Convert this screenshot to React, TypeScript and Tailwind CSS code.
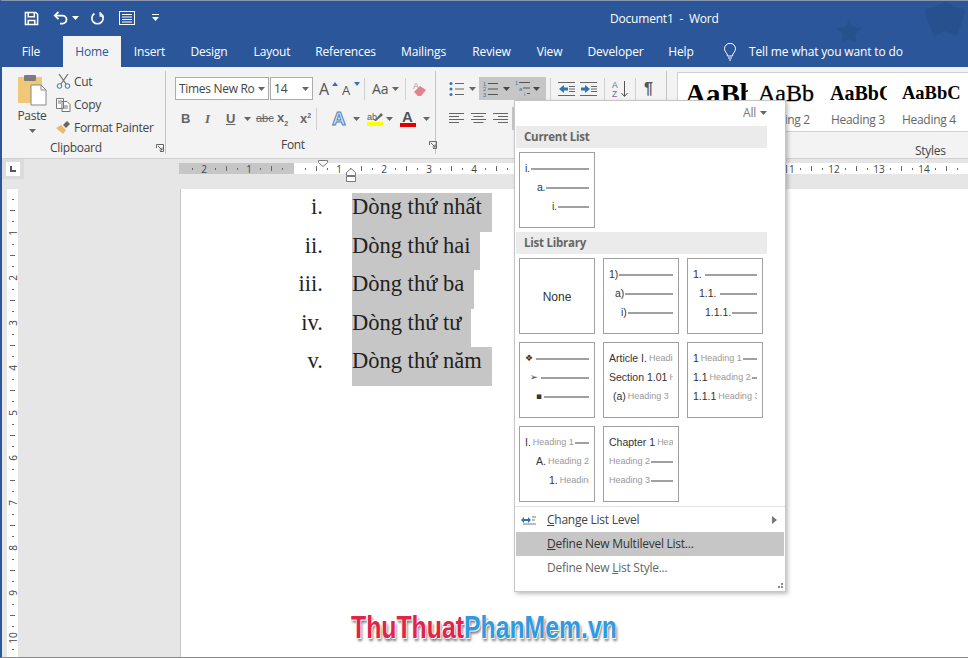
import React from 'react';

const Caret = ({ color = '#666' }: { color?: string }) => (
  <svg width="7" height="4" viewBox="0 0 7 4" className="shrink-0"><path d="M0 0h7L3.5 4z" fill={color} /></svg>
);

const Launcher = () => (
  <svg width="8" height="8" viewBox="0 0 8 8" className="shrink-0" fill="none" stroke="#666">
    <path d="M.5 4V.5H7.500V7.500H4" /><path d="M2 2l4 4M6 3.500V6H3.500" />
  </svg>
);

const Lines = ({ x = 0, ys, w = 14, color = '#777' }: { x?: number; ys: number[]; w?: number; color?: string }) => (
  <g stroke={color}>{ys.map((y) => <path key={y} d={`M${x} ${y}h${w}`} />)}</g>
);

const Tabs = [
  { t: 'Insert', w: 'w-[57px]' },
  { t: 'Design', w: 'w-[62px]' },
  { t: 'Layout', w: 'w-[64px]' },
  { t: 'References', w: 'w-[83px]' },
  { t: 'Mailings', w: 'w-[73px]' },
  { t: 'Review', w: 'w-[63px]' },
  { t: 'View', w: 'w-[53px]' },
  { t: 'Developer', w: 'w-[79px]' },
  { t: 'Help', w: 'w-[52px]' },
];

const TitleBar = () => (
  <div className="relative h-[33px] shrink-0 flex items-center pt-[1px] bg-[#2b579a] text-white">
    <svg width="15" height="15" viewBox="0 0 16 16" className="ml-[22px]" fill="none" stroke="#fff" strokeWidth="1.6">
      <path d="M1.500 1.500h11l2 2v11h-13z" /><path d="M4.500 2v4h6.500V2M4.500 14.500v-4.500h7v4.500" />
    </svg>
    <svg width="16" height="14" viewBox="0 0 16 14" className="ml-[14px]" fill="none" stroke="#fff" strokeWidth="1.8">
      <path d="M5.500 1L1.800 4.600l3.700 3.600" /><path d="M2 4.600h7.500a4 4 0 0 1 0 8H7" />
    </svg>
    <div className="ml-[3px]"><Caret color="#fff" /></div>
    <svg width="15" height="15" viewBox="0 0 16 16" className="ml-[11px]" fill="none" stroke="#fff" strokeWidth="1.8">
      <path d="M4.700 2.600a6 6 0 1 0 6.600 0" /><path d="M10.800 1v4.400h4" strokeWidth="1.400" />
    </svg>
    <svg width="16" height="14" viewBox="0 0 16 14" className="ml-[14px]" fill="none" stroke="#fff">
      <rect x=".5" y=".5" width="15" height="13" /><path d="M3 3.500h10M3 6h10M3 8.500h10M3 11h10" />
    </svg>
    <svg width="7" height="8" viewBox="0 0 7 8" className="ml-[17px]" fill="#fff"><path d="M0 0h7v1H0zM0 3h7L3.500 7z" /></svg>
    <span className="ml-[451px] mt-[1px] text-[12px] tracking-[-0.2px]">Document1&nbsp; -&nbsp; Word</span>
    <svg width="46" height="44" viewBox="0 0 24 24" className="absolute left-[920px] top-[-3px]" fill="#27508f"><path d="M12 2l6 3 5 1-2 8-3 7-6-3-6 3-3-7-2-8 5-1z" /></svg>
    <svg width="30" height="30" viewBox="0 0 24 24" className="absolute left-[832px] top-[16px]" fill="#27508f"><path d="M12 2l3 6 7 1-5 5 1 7-6-3-6 3 1-7-5-5 7-1z" /></svg>
  </div>
);

const TabRow = () => (
  <div className="h-[33px] shrink-0 flex items-end bg-[#2b579a] text-white text-[12px] tracking-[-0.15px]">
    <div className="w-[58px] mr-[3px] h-[30px] flex items-center justify-center">File</div>
    <div className="w-[58px] h-[31px] pt-[1px] bg-[#f3f3f3] text-[#2b579a] flex items-center justify-center">Home</div>
    {Tabs.map((x) => (
      <div key={x.t} className={`${x.w} h-[30px] flex items-center justify-center`}>{x.t}</div>
    ))}
    <svg width="16" height="18" viewBox="0 0 16 18" className="ml-[15px] mb-[6px]" fill="none" stroke="#fff">
      <path d="M5.500 13c0-3-3-4-3-7.200a5.500 5.500 0 0 1 11 0C13.500 9 10.500 10 10.500 13zM6 15h4M7 17h2" />
    </svg>
    <span className="ml-[11px] h-[30px] flex items-center">Tell me what you want to do</span>
  </div>
);

const GroupLabel = ({ text, cls }: { text: string; cls: string }) => (
  <div className={`h-[18px] flex items-center text-[12px] text-[#444] tracking-[-0.3px] ${cls}`}>{text}</div>
);

const Clipboard = () => (
  <div className="w-[164px] shrink-0 border-r border-[#c4c4c4] my-[4px] flex flex-col">
    <div className="flex h-[70px]">
      <div className="w-[54px] flex flex-col items-center pl-[6px]">
        <svg width="30" height="32" viewBox="0 0 30 32" className="mt-[3px]">
          <rect x="1" y="3" width="24" height="26" rx="1" fill="#efc878" />
          <rect x="7" y="1" width="12" height="6" rx="1" fill="#7b7b7b" />
          <path d="M14 11h10l5 5v15H14z" fill="#fff" stroke="#888" />
          <path d="M24 11v5h5" fill="none" stroke="#888" />
        </svg>
        <span className="text-[12px] leading-[14px] mt-[3px] text-[#444] tracking-[-0.3px]">Paste</span>
        <div className="mt-[6px]"><Caret /></div>
      </div>
      <div className="flex flex-col text-[12px] text-[#444] tracking-[-0.3px] mt-[-1px] leading-[23px]">
        <div className="flex items-center h-[23px]">
          <svg width="15" height="15" viewBox="0 0 15 15" fill="none" className="mr-[3px]">
            <path d="M3 0l7 10M12 0L5 10" stroke="#777" strokeWidth="1.300" />
            <circle cx="3.500" cy="12" r="2.300" stroke="#2e74b5" /><circle cx="11.500" cy="12" r="2.300" stroke="#2e74b5" />
          </svg>
          Cut
        </div>
        <div className="flex items-center h-[23px]">
          <svg width="15" height="15" viewBox="0 0 15 15" fill="#fff" stroke="#777" className="mr-[3px]">
            <path d="M.5 1.500h7v10h-7zM6 4.500h5l3 3v7H6z" /><path d="M2 4h4M2 6h3M8 9h4M8 11h4" />
          </svg>
          Copy
        </div>
        <div className="flex items-center h-[23px]">
          <svg width="15" height="15" viewBox="0 0 15 15" className="mr-[3px]">
            <path d="M0 8l5-3 5 5-3 4z" fill="#eeb868" /><path d="M7 5l4-4 3 3-4 4z" fill="#666" />
          </svg>
          Format Painter
        </div>
      </div>
    </div>
    <div className="flex items-center">
      <GroupLabel text="Clipboard" cls="ml-[48px]" />
      <div className="ml-[54px]"><Launcher /></div>
    </div>
  </div>
);

const Sep = ({ cls }: { cls: string }) => <div className={`w-px h-[22px] bg-[#d0d0d0] ${cls}`} />;

const FontGroup = () => (
  <div className="w-[270px] shrink-0 border-r border-[#c4c4c4] my-[4px] flex flex-col text-[#555]">
    <div className="h-[70px] flex flex-col pl-[9px] pt-[6px]">
      <div className="flex items-center h-[23px]">
        <div className="w-[94px] h-[23px] border border-[#ababab] bg-white flex items-center justify-between px-[3px] text-[12px] text-[#444] tracking-[-0.3px]">
          Times New Ro<Caret />
        </div>
        <div className="w-[43px] h-[23px] ml-px border border-[#ababab] bg-white flex items-center justify-between px-[3px] text-[12px] text-[#444]">
          14<Caret />
        </div>
        <div className="ml-[6px] w-[13px] text-[16px] leading-none">A</div>
        <div className="w-[8px] mb-[10px]"><svg width="6" height="4" viewBox="0 0 6 4"><path d="M0 4h6L3 0z" fill="#2e74b5" /></svg></div>
        <div className="ml-[2px] w-[12px] text-[13px] leading-none mt-[3px]">A</div>
        <div className="w-[7px] mb-[10px]"><svg width="6" height="4" viewBox="0 0 6 4"><path d="M0 0h6L3 4z" fill="#2e74b5" /></svg></div>
        <Sep cls="ml-[3px]" />
        <div className="ml-[7px] text-[14px] leading-none flex items-center gap-[3px]">Aa<Caret /></div>
        <Sep cls="ml-[6px]" />
        <svg width="16" height="16" viewBox="0 0 16 16" className="ml-[6px]">
          <path d="M2 11l6-6 6 4-5 6H6z" fill="#e8808c" /><text x="1" y="8" fontSize="9" fill="#a0a0a0" fontFamily="Liberation Sans">A</text>
        </svg>
      </div>
      <div className="flex items-center h-[23px] mt-[7px]">
        <span className="ml-[6px] w-[24px] text-[13px] font-bold text-[#666] font-['Liberation_Sans']">B</span>
        <span className="w-[21px] text-[13px] italic font-['Liberation_Serif'] font-bold text-[#666]">I</span>
        <span className="w-[18px] text-[13px] font-bold underline text-[#666] font-['Liberation_Sans']">U</span>
        <Caret />
        <span className="ml-[5px] w-[19px] text-[11px] line-through text-[#666] font-['Liberation_Sans']">abc</span>
        <span className="w-[23px] ml-[2px] text-[13px] font-bold text-[#666] font-['Liberation_Sans']">x<span className="text-[7px] align-sub">2</span></span>
        <span className="w-[18px] text-[13px] font-bold text-[#666] font-['Liberation_Sans']">x<span className="text-[7px] align-super">2</span></span>
        <Sep cls="ml-[-2px]" />
        <span className="ml-[15px] w-[17px] text-[19px] leading-none font-bold text-[#d4e4f6] [-webkit-text-stroke:1px_#4f81bd] font-['Liberation_Sans']">A</span>
        <div className="ml-[4px]"><Caret /></div>
        <div className="ml-[6px] w-[17px] flex flex-col items-center">
          <svg width="16" height="11" viewBox="0 0 16 11">
            <text x="0" y="9" fontSize="9" fill="#555" fontFamily="Liberation Sans">ab</text>
            <path d="M7 10l7-8 2 2-7 6z" fill="#666" />
          </svg>
          <div className="w-[16px] h-[4px] bg-[#ffff00]" />
        </div>
        <div className="ml-[3px]"><Caret /></div>
        <div className="ml-[6px] w-[17px] flex flex-col items-center text-[15px] leading-[12px] font-bold font-['Liberation_Sans'] text-[#555]">
          A<div className="w-[16px] h-[4px] bg-[#e00000]" />
        </div>
        <div className="ml-[7px]"><Caret /></div>
      </div>
    </div>
    <div className="flex items-center">
      <GroupLabel text="Font" cls="ml-[115px]" />
      <div className="ml-[124px]"><Launcher /></div>
    </div>
  </div>
);

const ParagraphGroup = () => (
  <div className="w-[231px] shrink-0 border-r border-[#c4c4c4] my-[4px] flex flex-col pl-[13px] pt-[6px]">
    <div className="flex items-center h-[23px] relative">
      <svg width="15" height="16" viewBox="0 0 15 16">
        <circle cx="2" cy="2.500" r="1.500" fill="#2e74b5" /><circle cx="2" cy="8" r="1.500" fill="#2e74b5" /><circle cx="2" cy="13.500" r="1.500" fill="#2e74b5" />
        <Lines x={6} w={9} ys={[2.5, 8, 13.5]} color="#666" />
      </svg>
      <div className="ml-[5px]"><Caret /></div>
      <div className="ml-[3px] w-[67px] h-[23px] bg-[#c6c6c6] flex items-center">
        <svg width="15" height="16" viewBox="0 0 15 16" className="ml-[4px]">
          <text x="0" y="5" fontSize="5.500" fill="#2e74b5" fontFamily="Liberation Sans">1</text>
          <text x="0" y="10" fontSize="5.500" fill="#2e74b5" fontFamily="Liberation Sans">2</text>
          <text x="0" y="15.500" fontSize="5.500" fill="#2e74b5" fontFamily="Liberation Sans">3</text>
          <Lines x={5} w={10} ys={[2.5, 8, 13.5]} color="#555" />
        </svg>
        <div className="ml-[5px]"><Caret color="#444" /></div>
        <svg width="16" height="17" viewBox="0 0 16 17" className="ml-[5px]">
          <text x="0" y="5" fontSize="5.500" fill="#2e74b5" fontFamily="Liberation Sans">1</text>
          <text x="4" y="10.500" fontSize="5.500" fill="#2e74b5" fontFamily="Liberation Sans">a</text>
          <text x="9" y="16" fontSize="5.500" fill="#2e74b5" fontFamily="Liberation Sans">i</text>
          <path d="M4 2.500h11M8 8h7M12 13.500h3" stroke="#555" />
        </svg>
        <div className="ml-[2px]"><Caret color="#444" /></div>
      </div>
      <Sep cls="ml-[4px]" />
      <svg width="17" height="14" viewBox="0 0 17 14" className="ml-[7px]">
        <path d="M1 7l5-4v2.500h4v3H6V11z" fill="#2e74b5" /><Lines x={0} w={17} ys={[0.5, 13.5]} color="#666" /><Lines x={11} w={6} ys={[4.5, 7, 9.5]} color="#666" />
      </svg>
      <svg width="17" height="14" viewBox="0 0 17 14" className="ml-[5px]">
        <path d="M10 7L5 3v2.500H1v3h4V11z" fill="#2e74b5" /><Lines x={0} w={17} ys={[0.5, 13.5]} color="#666" /><Lines x={11} w={6} ys={[4.5, 7, 9.5]} color="#666" />
      </svg>
      <Sep cls="ml-[7px]" />
      <svg width="17" height="18" viewBox="0 0 17 18" className="ml-[7px]">
        <text x="0" y="8" fontSize="8.500" fontFamily="Liberation Sans" fill="#2e74b5">A</text>
        <text x="0" y="17" fontSize="8.500" fontFamily="Liberation Sans" fill="#8a5ca8">Z</text>
        <path d="M12.500 1v15M9.500 13l3 3.500 3-3.500" fill="none" stroke="#555" />
      </svg>
      <Sep cls="ml-[6px]" />
      <span className="ml-[8px] text-[16px] leading-none text-[#555] font-bold font-['Liberation_Sans']">¶</span>
    </div>
    <div className="flex items-center h-[23px] mt-[7px]">
      <svg width="15" height="11" viewBox="0 0 15 11"><path d="M0 .5h15M0 3.500h10M0 6.500h15M0 9.500h10" stroke="#666" /></svg>
      <svg width="15" height="11" viewBox="0 0 15 11" className="ml-[7px]"><path d="M0 .5h15M2.500 3.500h10M0 6.500h15M2.500 9.500h10" stroke="#666" /></svg>
      <svg width="15" height="11" viewBox="0 0 15 11" className="ml-[7px]"><path d="M0 .5h15M5 3.500h10M0 6.500h15M5 9.500h10" stroke="#666" /></svg>
      <div className="ml-[4px] w-[16px] h-[23px] bg-[#c6c6c6]" />
    </div>
  </div>
);

const Styles = () => (
  <div className="flex-1 min-w-0 flex flex-col mt-[5px] ml-[10px]">
    <div className="h-[60px] shrink-0 bg-white border border-[#d0d0d0] border-r-0 flex overflow-hidden">
      <div className="w-[70px] shrink-0 pl-[7px] overflow-hidden font-['Liberation_Serif'] font-bold text-[29px] leading-[42px] whitespace-nowrap text-black">AaBbCc</div>
      <div className="w-[71px] shrink-0 pl-[10px] overflow-hidden whitespace-nowrap flex flex-col">
        <span className="font-['Liberation_Serif'] text-[24px] leading-[40px] text-black [-webkit-text-stroke:0.3px_#000]">AaBb</span>
        <span className="text-[12px] leading-[14px] text-[#666] tracking-[-0.3px] ml-[-2px]">Heading 2</span>
      </div>
      <div className="w-[68px] shrink-0 pl-[11px] overflow-hidden whitespace-nowrap flex flex-col">
        <span className="font-['Liberation_Serif'] font-bold text-[20px] leading-[40px] text-black">AaBbCc</span>
        <span className="text-[12px] leading-[14px] text-[#666] tracking-[-0.3px] ml-[1px]">Heading 3</span>
      </div>
      <div className="flex-1 min-w-0 pl-[15px] overflow-hidden whitespace-nowrap flex flex-col">
        <span className="font-['Liberation_Serif'] font-bold text-[18.5px] leading-[40px] text-black">AaBbC</span>
        <span className="text-[12px] leading-[14px] text-[#666] tracking-[-0.3px]">Heading 4</span>
      </div>
    </div>
    <GroupLabel text="Styles" cls="ml-[238px] mt-[10px]" />
  </div>
);

const Ribbon = () => (
  <div className="h-[92px] shrink-0 flex bg-[#f3f3f3] border-b border-[#d0d0d0]">
    <Clipboard />
    <FontGroup />
    <ParagraphGroup />
    <Styles />
  </div>
);

const slots = (from: number, to: number) => {
  const out: number[] = [];
  for (let i = from; i <= to; i++) out.push(i);
  return out;
};

const HSlot = ({ i }: { i: number }) => (
  <div className="w-[11.25px] shrink-0 flex items-center justify-center text-[10px] leading-none text-[#444] font-['Open_Sans']">
    {i % 4 === 0 ? Math.abs(i / 4) : i % 2 === 0 ? <div className="w-px h-[5px] bg-[#666]" /> : <div className="w-px h-[2px] bg-[#666]" />}
  </div>
);

const VSlot = ({ i }: { i: number }) => (
  <div className="h-[11.25px] shrink-0 flex items-center justify-center text-[10px] leading-none text-[#444] font-['Open_Sans']">
    {i % 4 === 0 ? <span className="-rotate-90">{i / 4}</span> : i % 2 === 0 ? <div className="h-px w-[5px] bg-[#666]" /> : <div className="h-px w-[2px] bg-[#666]" />}
  </div>
);

const HRuler = () => (
  <div className="relative h-[30px] shrink-0 flex">
    <div className="w-[22px] h-[20px] shrink-0 bg-[#dcdcdc] flex items-center justify-center">
      <div className="w-[14px] h-[14px] bg-white flex items-center justify-center">
        <div className="w-[6px] h-[6px] border-l-2 border-b-2 border-[#555]" />
      </div>
    </div>
    <div className="ml-[155px] mt-[4px] h-[11px] flex flex-1 min-w-0">
      <div className="w-[115px] shrink-0 bg-[#c6c6c6] pr-[5.625px] flex justify-end overflow-hidden">
        {slots(-9, -1).map((i) => <HSlot key={i} i={i} />)}
      </div>
      <div className="flex-1 min-w-0 bg-white pl-[5.625px] flex overflow-hidden">
        {slots(1, 59).map((i) => <HSlot key={i} i={i} />)}
      </div>
    </div>
    <svg width="10" height="7" viewBox="0 0 10 7" className="absolute left-[316px] top-[1px]"><path d="M.5.500h9v2l-4.500 4-4.500-4z" fill="#fff" stroke="#777" /></svg>
    <svg width="10" height="14" viewBox="0 0 10 14" className="absolute left-[344px] top-[9px]"><path d="M.5 4.500l4.500-4 4.500 4v3h-9zM.5 8.500h9v5h-9z" fill="#fff" stroke="#777" /></svg>
  </div>
);

const listRows = [
  { n: 'i.', t: 'Dòng thứ nhất', w: 'w-[140px]' },
  { n: 'ii.', t: 'Dòng thứ hai', w: 'w-[128px]' },
  { n: 'iii.', t: 'Dòng thứ ba', w: 'w-[122px]' },
  { n: 'iv.', t: 'Dòng thứ tư', w: 'w-[119px]' },
  { n: 'v.', t: 'Dòng thứ năm', w: 'w-[140px]' },
];

const Page = () => (
  <div className="flex-1 bg-white border-l border-[#c6c6c6] pt-[4px] font-['Liberation_Serif'] text-[22.5px] text-[#222]">
    {listRows.map((r) => (
      <div key={r.n} className="flex h-[38.5px]">
        <div className="w-[142px] text-right leading-[28px]">{r.n}</div>
        <div className={`ml-[29px] ${r.w} bg-[#c6c6c6] leading-[28px] whitespace-nowrap`}>{r.t}</div>
      </div>
    ))}
  </div>
);

type Row = { ml: string; label: React.ReactNode; line?: boolean };

const Thumb = ({ rows }: { rows: Row[] }) => (
  <div className="w-[76px] h-[76px] border border-[#a0a0a0] bg-white pt-[6px] px-[5px] font-['Liberation_Sans'] text-[10.5px] text-[#333]">
    {rows.map((r, i) => (
      <div key={i} className={`h-[19px] flex items-center whitespace-nowrap overflow-hidden ${r.ml}`}>
        {r.label}
        {r.line && <div className="flex-1 h-[2px] ml-px bg-[#a0a0a0]" />}
      </div>
    ))}
  </div>
);

const G = ({ children }: { children: React.ReactNode }) => (
  <span className="text-[#999] text-[9px] ml-[2px]">{children}</span>
);

const Menu = () => (
  <div className="absolute left-[512px] top-[99px] w-[272px] h-[492px] bg-white border border-[#c6c6c6] shadow-[2px_2px_4px_rgba(0,0,0,0.25)] flex flex-col text-[12px] text-[#444] tracking-[-0.25px]">
    <div className="h-[25px] shrink-0 flex items-center justify-end pr-[18px] pb-[2px] gap-[4px] text-[#777]">All<Caret /></div>
    <div className="mx-px w-[251px] h-[22px] shrink-0 bg-[#ebebeb] flex items-center pl-[8px] text-[11.5px] font-bold text-[#666]">Current List</div>
    <div className="pl-[4px] pt-[4px] pb-[4px]">
      <Thumb rows={[
        { ml: '', label: 'i.', line: true },
        { ml: 'ml-[12px]', label: 'a.', line: true },
        { ml: 'ml-[27px]', label: 'i.', line: true },
      ]} />
    </div>
    <div className="mx-px w-[251px] h-[22px] shrink-0 bg-[#ebebeb] flex items-center pl-[8px] text-[11.5px] font-bold text-[#666]">List Library</div>
    <div className="pl-[4px] pt-[4px] grid grid-cols-[76px_76px_76px] gap-[8px] tracking-normal">
      <div className="w-[76px] h-[76px] pt-[1px] border border-[#a0a0a0] flex items-center justify-center font-['Liberation_Sans'] text-[12px] text-[#333]">None</div>
      <Thumb rows={[
        { ml: '', label: '1)', line: true },
        { ml: 'ml-[6px]', label: 'a)', line: true },
        { ml: 'ml-[12px]', label: 'i)', line: true },
      ]} />
      <Thumb rows={[
        { ml: '', label: <span className="mr-[2px]">1.</span>, line: true },
        { ml: 'ml-[6px]', label: <span className="mr-[2px]">1.1.</span>, line: true },
        { ml: 'ml-[12px]', label: '1.1.1.', line: true },
      ]} />
      <Thumb rows={[
        { ml: '', label: <span className="font-['DejaVu_Sans'] text-[9px] mr-[2px]">❖</span>, line: true },
        { ml: 'ml-[5px]', label: <span className="font-['DejaVu_Sans'] text-[9px] mr-[2px]">➢</span>, line: true },
        { ml: 'ml-[11px]', label: <span className="font-['DejaVu_Sans'] text-[9px] mr-[1px]">▪</span>, line: true },
      ]} />
      <Thumb rows={[
        { ml: '', label: <>Article I.<G>Heading 1</G></> },
        { ml: '', label: <>Section 1.01<G>Heading 2</G></> },
        { ml: 'ml-[4px]', label: <>(a)<G>Heading 3</G></> },
      ]} />
      <Thumb rows={[
        { ml: '', label: <>1<G>Heading 1</G></>, line: true },
        { ml: '', label: <>1.1<G>Heading 2</G></>, line: true },
        { ml: '', label: <>1.1.1<G>Heading 3</G></> },
      ]} />
      <Thumb rows={[
        { ml: '', label: <>I.<G>Heading 1</G></>, line: true },
        { ml: 'ml-[11px]', label: <>A.<G>Heading 2</G></> },
        { ml: 'ml-[24px]', label: <>1.<G>Heading 3</G></> },
      ]} />
      <Thumb rows={[
        { ml: '', label: <>Chapter 1<G>Heading 1</G></> },
        { ml: '', label: <span className="text-[#999] text-[9px]">Heading 2</span>, line: true },
        { ml: '', label: <span className="text-[#999] text-[9px]">Heading 3</span>, line: true },
      ]} />
    </div>
    <div className="mt-[4px] border-t border-[#e2e2e2] pt-[1px]">
      <div className="h-[24px] flex items-center relative pl-[32px]">
        <svg width="15" height="10" viewBox="0 0 15 10" className="absolute left-[6px] top-[7px]">
          <path d="M0 5l3-3v2h4V2l3 3-3 3V6H3v2z" fill="#2e74b5" /><path d="M11 2h4M11 5h3M2 9h13" stroke="#777" />
        </svg>
        <span><u>C</u>hange List Level</span>
        <svg width="5" height="8" viewBox="0 0 5 8" className="absolute left-[257px] top-[8px]"><path d="M0 0l5 4-5 4z" fill="#777" /></svg>
      </div>
      <div className="h-[24px] flex items-center pl-[32px] mx-px bg-[#c6c6c6] text-[#333]"><span className="ml-[-1px]"><u>D</u>efine New Multilevel List...</span></div>
      <div className="h-[24px] flex items-center pl-[32px] text-[#666]"><span>Define New <u>L</u>ist Style...</span></div>
    </div>
    <svg width="8" height="6" viewBox="0 0 8 6" className="absolute left-[260px] top-[482px]" fill="#888"><path d="M6 0h2v2H6zM3 3h2v2H3zM6 3h2v2H6z" /></svg>
  </div>
);

const Logo = () => (
  <div className="absolute left-[349px] top-[607px] origin-left scale-x-[0.775] whitespace-nowrap font-['Liberation_Sans'] font-bold text-[32px] leading-[38px] [text-shadow:1px_1px_0_#fff,-1px_-1px_0_#fff,2px_3px_3px_rgba(0,0,0,0.55)]">
    <span className="text-[#e3234b]">ThuThuat</span><span className="text-[#2c9be3]">PhanMem.vn</span>
  </div>
);

export default function App() {
  return (
    <div className="relative w-[968px] h-[658px] overflow-hidden flex flex-col bg-[#e6e6e6] border-t border-[#8796b0] border-l-2 border-l-[#2b579a] border-b border-b-[#8a8a8a] font-['Open_Sans',sans-serif]">
      <TitleBar />
      <TabRow />
      <Ribbon />
      <div className="flex-1 flex flex-col min-h-0">
        <HRuler />
        <div className="flex-1 flex min-h-0">
          <div className="w-[178px] shrink-0">
            <div className="ml-[5px] w-[11px] h-full bg-white pt-[4.6px] overflow-hidden flex flex-col">
              {slots(1, 42).map((i) => <VSlot key={i} i={i} />)}
            </div>
          </div>
          <Page />
        </div>
      </div>
      <Menu />
      <Logo />
    </div>
  );
}
